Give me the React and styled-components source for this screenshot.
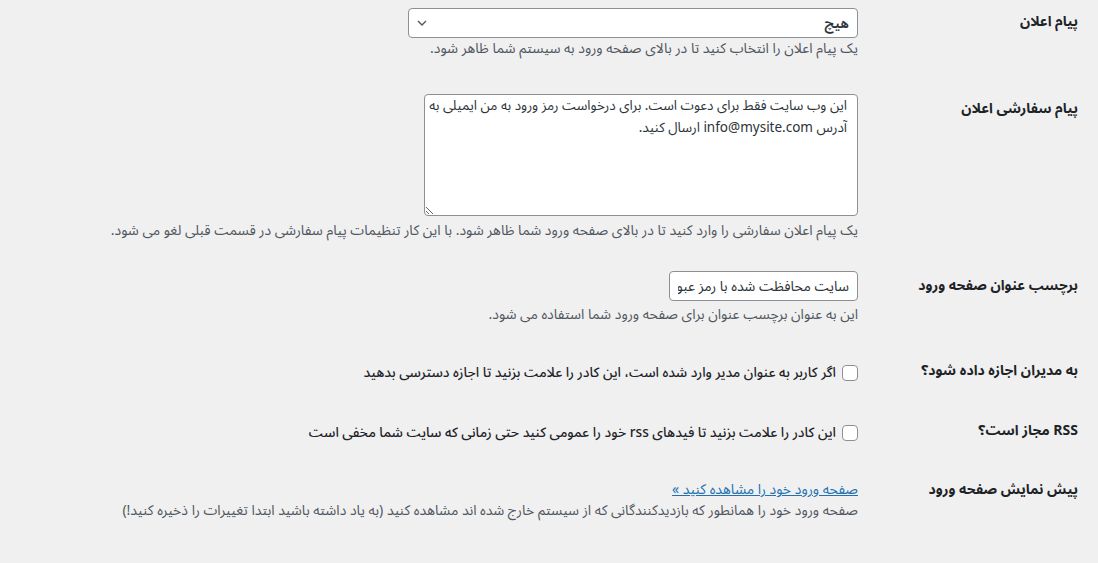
import React from "react";
import styled, { createGlobalStyle } from "styled-components";

const Global = createGlobalStyle`
  html, body { margin: 0; padding: 0; background: #f0f0f1; }
  body {
    font-family: "Noto Sans Arabic", "Noto Sans", "DejaVu Sans", sans-serif;
    color: #1d2327;
    font-size: 13px;
  }
`;

const Page = styled.div`
  direction: rtl;
  padding: 0 20px 0 20px;
  height: 563px;
  box-sizing: border-box;
  overflow: hidden;
`;

const Row = styled.div`
  display: grid;
  grid-template-columns: 210px 1fr;
`;

const Th = styled.div`
  padding: ${(p) => p.$pt ?? 21}px 0 0 10px;
  font-size: 14px;
  font-weight: 700;
  line-height: 18px;
  color: #1d2327;
`;

const Td = styled.div`
  padding: ${(p) => p.$pt}px 10px ${(p) => p.$pb}px 0;
  display: flex;
  flex-direction: column;
  align-items: flex-start;
`;

const Description = styled.p`
  margin: ${(p) => p.$mt ?? 4}px 0 0;
  font-size: 14px;
  line-height: 20px;
  color: #50575e;
`;

const SelectWrap = styled.div`
  position: relative;
  width: 450px;
`;

const Select = styled.select`
  appearance: none;
  -webkit-appearance: none;
  width: 100%;
  height: 30px;
  box-sizing: border-box;
  border: 1px solid #8c8f94;
  border-radius: 4px;
  background: #fff;
  font-family: inherit;
  font-size: 14px;
  font-weight: 600;
  color: #2c3338;
  padding: 0 8px 0 24px;
  direction: rtl;
`;

const Chevron = styled.svg`
  position: absolute;
  left: 9px;
  top: 11px;
  pointer-events: none;
`;

const TextArea = styled.textarea`
  width: 434px;
  height: 122px;
  box-sizing: border-box;
  border: 1px solid #8c8f94;
  border-radius: 4px;
  background: #fff;
  font-family: inherit;
  font-size: 13.5px;
  line-height: 22px;
  color: #2c3338;
  padding: 0 10px 0 4px;
  margin: 0;
  direction: rtl;
  resize: both;
`;

const TextInput = styled.input`
  width: 189px;
  height: 30px;
  box-sizing: border-box;
  border: 1px solid #8c8f94;
  border-radius: 4px;
  background: #fff;
  font-family: inherit;
  font-size: 14px;
  color: #2c3338;
  padding: 0 8px;
  direction: rtl;
`;

const CheckLabel = styled.label`
  display: flex;
  align-items: center;
  gap: 6px;
  font-size: 13.7px;
  font-weight: 500;
  line-height: 24px;
  color: #1d2327;
`;

const Checkbox = styled.span`
  width: 16px;
  height: 16px;
  box-sizing: border-box;
  border: 1px solid #8c8f94;
  border-radius: 4px;
  background: #fff;
  flex: none;
`;

const Link = styled.a`
  font-size: 14px;
  line-height: 18px;
  color: #2271b1;
  text-decoration: underline;
`;

export default function App() {
  return (
    <>
      <Global />
      <Page>
        <Row>
          <Th $pt={13}>پیام اعلان</Th>
          <Td $pt={8} $pb={20}>
            <SelectWrap>
              <Select defaultValue="none">
                <option value="none">هیچ</option>
              </Select>
              <Chevron width="10" height="8" viewBox="0 0 10 8">
                <path d="M1 2 L5 6 L9 2" fill="none" stroke="#50575e" strokeWidth="1.4" />
              </Chevron>
            </SelectWrap>
            <Description $mt={1}>یک پیام اعلان را انتخاب کنید تا در بالای صفحه ورود به سیستم شما ظاهر شود.</Description>
          </Td>
        </Row>
        <Row>
          <Th>پیام سفارشی اعلان</Th>
          <Td $pt={15} $pb={15}>
            <TextArea
              defaultValue={"این وب سایت فقط برای دعوت است. برای درخواست رمز ورود به من ایمیلی به آدرس info@mysite.com ارسال کنید."}
            />
            <Description $mt={5}>یک پیام اعلان سفارشی را وارد کنید تا در بالای صفحه ورود شما ظاهر شود. با این کار تنظیمات پیام سفارشی در قسمت قبلی لغو می شود.</Description>
          </Td>
        </Row>
        <Row>
          <Th>برچسب عنوان صفحه ورود</Th>
          <Td $pt={15} $pb={16}>
            <TextInput defaultValue="سایت محافظت شده با رمز عبور" />
            <Description $mt={4}>این به عنوان برچسب عنوان برای صفحه ورود شما استفاده می شود.</Description>
          </Td>
        </Row>
        <Row>
          <Th>به مدیران اجازه داده شود؟</Th>
          <Td $pt={20} $pb={16}>
            <CheckLabel>
              <Checkbox />
              اگر کاربر به عنوان مدیر وارد شده است، این کادر را علامت بزنید تا اجازه دسترسی بدهید
            </CheckLabel>
          </Td>
        </Row>
        <Row>
          <Th>RSS مجاز است؟</Th>
          <Td $pt={20} $pb={15}>
            <CheckLabel>
              <Checkbox />
              این کادر را علامت بزنید تا فیدهای rss خود را عمومی کنید حتی زمانی که سایت شما مخفی است
            </CheckLabel>
          </Td>
        </Row>
        <Row>
          <Th>پیش نمایش صفحه ورود</Th>
          <Td $pt={21} $pb={15}>
            <Link href="#">صفحه ورود خود را مشاهده کنید »</Link>
            <Description $mt={2}>صفحه ورود خود را همانطور که بازدیدکنندگانی که از سیستم خارج شده اند مشاهده کنید (به یاد داشته باشید ابتدا تغییرات را ذخیره کنید!)</Description>
          </Td>
        </Row>
      </Page>
    </>
  );
}
